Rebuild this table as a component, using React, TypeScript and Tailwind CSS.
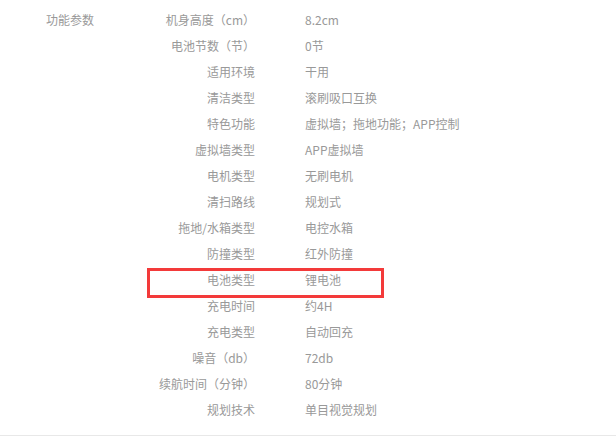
const specs: [string, string][] = [
  ["机身高度（cm）", "8.2cm"],
  ["电池节数（节）", "0节"],
  ["适用环境", "干用"],
  ["清洁类型", "滚刷吸口互换"],
  ["特色功能", "虚拟墙；拖地功能；APP控制"],
  ["虚拟墙类型", "APP虚拟墙"],
  ["电机类型", "无刷电机"],
  ["清扫路线", "规划式"],
  ["拖地/水箱类型", "电控水箱"],
  ["防撞类型", "红外防撞"],
  ["电池类型", "锂电池"],
  ["充电时间", "约4H"],
  ["充电类型", "自动回充"],
  ["噪音（db）", "72db"],
  ["续航时间（分钟）", "80分钟"],
  ["规划技术", "单目视觉规划"],
];

function SpecRow({ name, value }: { name: string; value: string }) {
  return (
    <>
      <dt className="h-[26px] leading-[26px] text-right whitespace-nowrap">{name}</dt>
      <dd className="h-[26px] leading-[26px] pl-[50px] whitespace-nowrap">{value}</dd>
    </>
  );
}

export default function App() {
  return (
    <div className="relative w-[616px] h-[439px] bg-white text-[12px] text-[#999] font-['Noto_Sans_CJK_SC','Microsoft_YaHei',sans-serif]">
      <div className="flex pt-[7px] pb-[12px] border-b border-[#e8e8e8]">
        <div className="w-[110px] pl-[46px] h-[26px] leading-[26px]">功能参数</div>
        <dl className="grid grid-cols-[145px_auto]">
          {specs.map(([name, value]) => (
            <SpecRow key={name} name={name} value={value} />
          ))}
        </dl>
      </div>
      {/* annotation box */}
      <div className="absolute left-[147px] top-[268px] w-[237px] h-[30px] border-[3px] border-[#f33a3a]" />
    </div>
  );
}
